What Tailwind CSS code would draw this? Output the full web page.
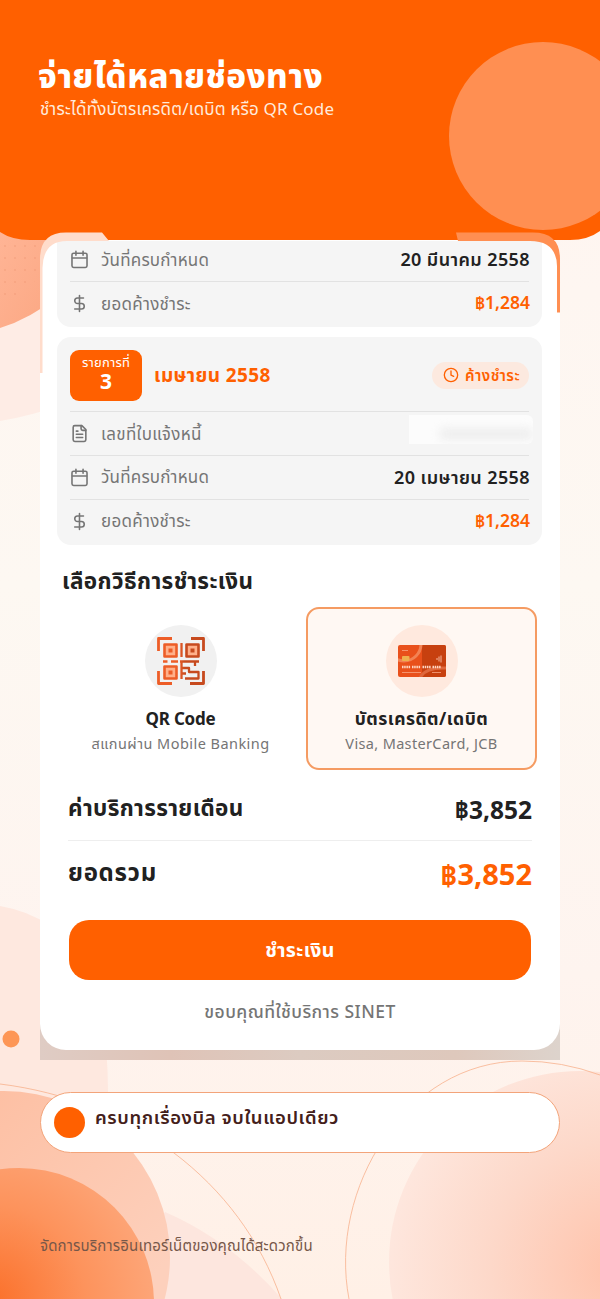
<!DOCTYPE html>
<html lang="th">
<head>
<meta charset="utf-8">
<meta name="viewport" content="width=device-width, initial-scale=1">
<title>SINET</title>
<script src="https://cdn.jsdelivr.net/npm/@tailwindcss/browser@4"></script>
</head>
<body class="bg-[#fef6f1]">
<svg width="0" height="0" class="absolute">
  <defs>
    <g id="calendar" fill="none" stroke="currentColor" stroke-width="2" stroke-linecap="round" stroke-linejoin="round"><rect x="2.500" y="4" width="19" height="18" rx="2"/><path d="M7.500 1.500v5M16.500 1.500v5M3 10h18"/></g>
    <g id="dollar" fill="none" stroke="currentColor" stroke-width="2" stroke-linecap="round" stroke-linejoin="round"><path d="M12 2v20M17 5H9.500a3.500 3.500 0 0 0 0 7h5a3.500 3.500 0 0 1 0 7H6"/></g>
    <g id="file" fill="none" stroke="currentColor" stroke-width="2" stroke-linecap="round" stroke-linejoin="round"><path d="M15 2H6a2 2 0 0 0-2 2v16a2 2 0 0 0 2 2h12a2 2 0 0 0 2-2V7Z"/><path d="M14 2v4a2 2 0 0 0 2 2h4M10 9H8M16 13H8M16 17H8"/></g>
  </defs>
</svg>
<div class="relative isolate flex h-[1299px] w-[600px] flex-col overflow-hidden whitespace-nowrap font-['Noto_Sans','Noto_Sans_Thai',sans-serif]">
  <!-- decorative backdrop -->
  <svg class="absolute inset-0 -z-10" width="600" height="1299" viewBox="0 0 600 1299">
    <defs>
      <linearGradient id="page" x1="0" y1="0" x2="0" y2="1"><stop offset="0" stop-color="#fff4f0"/><stop offset=".45" stop-color="#fdf8f2"/><stop offset=".75" stop-color="#fef4ef"/><stop offset="1" stop-color="#fff0e6"/></linearGradient>
      <linearGradient id="tl" x1="0" y1="0" x2="1" y2="1"><stop offset="0" stop-color="#ffb596"/><stop offset="1" stop-color="#fba681"/></linearGradient>
      <radialGradient id="core" gradientUnits="userSpaceOnUse" cx="-10" cy="1300" r="190"><stop offset="0" stop-color="#fb702a"/><stop offset=".5" stop-color="#fd935c"/><stop offset="1" stop-color="#fdac82"/></radialGradient>
      <linearGradient id="ring" gradientUnits="userSpaceOnUse" x1="0" y1="1090" x2="170" y2="1260"><stop offset="0" stop-color="#fdc0a4"/><stop offset="1" stop-color="#fdd0bc"/></linearGradient>
      <radialGradient id="right" gradientUnits="userSpaceOnUse" cx="620" cy="1270" r="235"><stop offset="0" stop-color="#ffc2aa"/><stop offset=".55" stop-color="#fdd8c9"/><stop offset="1" stop-color="#fee7de"/></radialGradient>
      <linearGradient id="shade" x1="0" y1="0" x2="1" y2="0"><stop offset="0" stop-color="#dfccc4"/><stop offset=".25" stop-color="#dfc3b7"/><stop offset=".5" stop-color="#dccbc1"/><stop offset=".8" stop-color="#dec8bc"/><stop offset="1" stop-color="#ddd3cc"/></linearGradient>
      <pattern id="dots" width="10" height="12" patternUnits="userSpaceOnUse"><circle cx="5" cy="6" r=".8" fill="#e98d68"/></pattern>
    </defs>
    <rect width="600" height="1299" fill="url(#page)"/>
    <path d="M0 225H60V405Q35 415 0 421Z" fill="#feece5"/>
    <path d="M0 225H60V295Q30 319 0 328Z" fill="url(#tl)"/>
    <path d="M0 244H40V275L18 300H0Z" fill="url(#dots)" opacity=".6"/>
    <path d="M0 0H600V231Q588 240 570 240H30Q12 240 0 232Z" fill="#ff6000"/>
    <circle cx="543" cy="136" r="94" fill="#ff8f52"/>
    <path d="M0 906Q58 916 84 965Q108 1012 108 1092L90 1140H0Z" fill="#fee8df"/>
    <circle cx="11" cy="1039" r="8.500" fill="#fd9656"/>
    <path d="M165 1212Q230 1240 282 1299H105Z" fill="#fde6de"/>
    <circle cx="4" cy="1257" r="166" fill="url(#ring)"/>
    <circle cx="19" cy="1303" r="135" fill="url(#core)"/>
    <circle cx="580" cy="1262" r="191" fill="url(#right)"/>
    <g fill="none" stroke="#f8b18d" stroke-width=".8"><path d="M0 1084C130 1100 240 1180 281 1299"/><path d="M349 1299C328 1190 405 1061 522 1061Q562 1061 600 1075"/></g>
    <path d="M40 1015H560V1060H40Z" fill="url(#shade)"/>
  </svg>

  <header class="flex h-[240px] flex-col pl-[38px] pt-[55px] text-white">
    <h1 class="flex h-10 items-center text-[33px] font-extrabold leading-none tracking-[.5px]">จ่ายได้หลายช่องทาง</h1>
    <p class="ml-[2px] mt-px flex h-6 items-center text-[17px] leading-none tracking-[.18px] text-[#ffebdc]">ชำระได้ทั้งบัตรเครดิต/เดบิต หรือ QR Code</p>
  </header>

  <main class="mx-10 flex h-[810px] flex-col rounded-b-[26px] rounded-t-[24px] bg-white text-[#212121]">
    <section class="ml-[17px] mt-px flex h-[86px] w-[485px] flex-col rounded-b-[14px] bg-[#f5f5f5] px-[13px] text-[17px] leading-none">
      <div class="flex h-[41px] items-center border-b border-[#e2e2e2] pb-[4px] text-[#757575]">
        <svg class="mt-px size-[19px]" viewBox="0 0 24 24"><use href="#calendar"/></svg><span class="ml-3 tracking-[.2px]">วันที่ครบกำหนด</span><b class="-mr-px ml-auto text-[18px] font-semibold tracking-[.4px] text-[#212121]">20 มีนาคม 2558</b>
      </div>
      <div class="flex h-[45px] items-center pb-[3px] text-[#757575]">
        <svg class="mt-px size-[19px]" viewBox="0 0 24 24"><use href="#dollar"/></svg><span class="ml-3 tracking-[.3px]">ยอดค้างชำระ</span><b class="-mr-px ml-auto text-[17.500px] font-semibold text-[#ff6000]">฿1,284</b>
      </div>
    </section>

    <section class="ml-[17px] mt-[10px] flex h-[208px] w-[485px] flex-col rounded-[14px] bg-[#f5f5f5] px-[13px] text-[17px] leading-none">
      <div class="flex h-[75px] items-center border-b border-[#e2e2e2]">
        <div class="mt-0.5 flex h-[51px] w-[72px] flex-col items-center rounded-[9px] bg-[#ff6000] pt-[5px] text-white">
          <span class="flex h-[15px] items-center text-[13px] tracking-[.2px]">รายการที่</span><b class="flex h-[23px] items-center text-[21px]">3</b>
        </div>
        <h2 class="ml-[12px] mt-0.5 text-[19px] font-bold tracking-[.4px] text-[#ff6000]">เมษายน 2558</h2>
        <span class="ml-auto mt-0.5 flex h-[27px] w-[97px] items-center rounded-full bg-[#fce9df] pl-[11px] text-[15px] font-semibold tracking-[.5px] text-[#ff6000]">
          <svg class="mr-[6px] size-[16px]" viewBox="0 0 24 24" fill="none" stroke="currentColor" stroke-width="2" stroke-linecap="round"><circle cx="12" cy="12" r="10"/><path d="M12 6v6l4 2"/></svg>ค้างชำระ</span>
      </div>
      <div class="flex h-[44px] items-center border-b border-[#e2e2e2] text-[#757575]">
        <svg class="size-[19px]" viewBox="0 0 24 24"><use href="#file"/></svg><span class="ml-3 tracking-[.35px]">เลขที่ใบแจ้งหนี้</span>
        <span class="-mr-1 mb-2 ml-auto flex h-[29px] w-[124px] items-center justify-end overflow-hidden rounded-r-md bg-[#fcfcfc]"><i class="mt-2 h-3 w-[94px] rounded-full bg-[#eeeeee] blur-[4px]"></i></span>
      </div>
      <div class="flex h-[44px] items-center border-b border-[#e2e2e2] pb-[2px] text-[#757575]">
        <svg class="mt-px size-[19px]" viewBox="0 0 24 24"><use href="#calendar"/></svg><span class="ml-3 tracking-[.2px]">วันที่ครบกำหนด</span><b class="-mr-px ml-auto text-[18px] font-semibold tracking-[.4px] text-[#212121]">20 เมษายน 2558</b>
      </div>
      <div class="flex h-[44px] items-center pb-[3px] text-[#757575]">
        <svg class="mt-px size-[19px]" viewBox="0 0 24 24"><use href="#dollar"/></svg><span class="ml-3 tracking-[.3px]">ยอดค้างชำระ</span><b class="-mr-px ml-auto text-[17.500px] font-semibold text-[#ff6000]">฿1,284</b>
      </div>
    </section>

    <h2 class="ml-[22px] mt-[20px] flex h-8 items-center text-[22.500px] font-bold leading-none tracking-[.4px]">เลือกวิธีการชำระเงิน</h2>

    <div class="ml-[25px] mt-[10px] flex h-[163px] gap-[10px] leading-none">
      <div class="flex w-[231px] flex-col items-center pt-[18px]">
        <svg class="size-[72px]" viewBox="0 0 72 72">
          <defs><linearGradient id="qr" gradientUnits="userSpaceOnUse" x1="12" y1="0" x2="60" y2="0"><stop offset=".45" stop-color="#ed5d27"/><stop offset=".58" stop-color="#c74a1e"/></linearGradient></defs>
          <circle cx="36" cy="36" r="36" fill="#f1f1f1"/>
          <g fill="none" stroke="url(#qr)" stroke-width="2.800" stroke-linejoin="round">
            <path d="M13.500 26V13.500H27M46 13.500H58.500V26M13.500 46V58.500H27M45 58.500H58.500V46"/>
            <path d="M19.500 19.500h12v12h-12zM41.500 19.500h12v12h-12zM19.500 41.500h12v12h-12z" fill="#ffb08a" stroke-width="2.600"/>
            <path d="M36.500 18V32.010M18 36.500H22.500M26 36.500H33.010M35 36.500H54.010M36.500 36V54M50 37V41M37 43H44V47H53.500V53.500H40.010M37 48.500H41" stroke-width="2.300"/>
          </g>
          <path d="M23.500 23.500h4v4h-4zM45.500 23.500h4v4h-4zM23.500 45.500h4v4h-4z" fill="url(#qr)"/>
        </svg>
        <b class="mt-[10px] flex h-[22px] items-center text-[17px] font-bold tracking-[-.2px]">QR Code</b>
        <span class="mt-[4px] flex h-[20px] items-center text-[14.500px] tracking-[.45px] text-[#757575]">สแกนผ่าน Mobile Banking</span>
      </div>
      <div class="flex w-[231px] flex-col items-center rounded-[13px] border-[2.500px] border-[#f59b62] bg-[#fff8f3] pt-[16px]">
        <svg class="size-[72px]" viewBox="0 0 72 72">
          <circle cx="36" cy="36" r="36" fill="#ffe9de"/>
          <clipPath id="cc"><rect x="12" y="20" width="48" height="32" rx="2"/></clipPath>
          <g clip-path="url(#cc)"><path d="M12 20h48v32H12z" fill="#e9501b"/><path d="M36 20h24v32H36z" fill="#c7400f"/>
            <circle cx="18" cy="19" r="17" fill="none" stroke="#f28254" stroke-width="3"/><path d="M34 53Q39 42 60 43" fill="none" stroke="#df673c" stroke-width="3"/></g>
          <rect x="16" y="31" width="7.500" height="5" rx="1" fill="#efb04e"/>
          <path d="M16 42H34.500M36.500 42H56" stroke="#ffd5c2" stroke-width="2.400" stroke-dasharray="1.500 .7 1.500 .7 1.500 .7 1.500 1.900"/>
          <path d="M16 47.500H35M46 47.500H55M16 25.500H22" stroke="#f7a483" stroke-width=".8"/>
          <path d="M51 33v2M53 31.500v5M55 30.500v7" stroke="#f5b79f" stroke-width="1"/>
        </svg>
        <b class="mt-[11px] flex h-[22px] items-center text-[17.500px] font-bold tracking-[.5px]">บัตรเครดิต/เดบิต</b>
        <span class="mt-[3px] flex h-[20px] items-center text-[14.500px] tracking-[.35px] text-[#757575]">Visa, MasterCard, JCB</span>
      </div>
    </div>

    <div class="mx-7 flex h-[71px] items-center justify-between border-b border-[#eeeeee] pt-[10px] font-bold leading-none">
      <span class="mb-1 text-[22.500px] tracking-[.35px]">ค่าบริการรายเดือน</span><span class="text-[24.500px]">฿3,852</span>
    </div>
    <div class="mx-7 flex h-[79px] items-center justify-between pb-[15px] font-bold leading-none">
      <span class="mb-[2px] text-[24px] tracking-[.7px]">ยอดรวม</span><span class="text-[29px] text-[#ff6000]">฿3,852</span>
    </div>
    <button class="mx-[29px] flex h-[60px] items-center justify-center rounded-[20px] bg-[#ff6000] text-[19.500px] font-bold leading-none tracking-[.4px] text-white">ชำระเงิน</button>
    <p class="mt-[19px] flex h-[26px] items-center justify-center text-[17.500px] font-medium leading-none tracking-[.45px] text-[#757575]">ขอบคุณที่ใช้บริการ SINET</p>
  </main>

  <!-- frame highlights on the panel's top corners -->
  <svg class="pointer-events-none absolute left-0 top-[230px]" width="600" height="145" viewBox="0 230 600 145">
    <path d="M40 373V259Q40 232.500 66 232.500H102L109 241H67Q43 241 42.500 268V373Z" fill="#ffdccb"/>
    <path d="M456 232.500H533Q560 232.500 560 259V312.500H557V266Q556.500 241 530 241H458Z" fill="#ff8f52"/>
  </svg>

  <section class="mx-10 mt-[42px] flex h-[61px] items-center rounded-full border border-[#f3a47a] bg-white pl-[13px] leading-none">
    <i class="size-[31px] rounded-full bg-[#ff6000]"></i>
    <b class="mb-[10px] ml-[10px] text-[18.500px] font-semibold tracking-[.6px] text-[#44201a]">ครบทุกเรื่องบิล จบในแอปเดียว</b>
  </section>

  <footer class="ml-10 mt-[80px] flex h-6 items-center text-[15px] leading-none tracking-[.18px] text-[#765749]">จัดการบริการอินเทอร์เน็ตของคุณได้สะดวกขึ้น</footer>
</div>
</body>
</html>
